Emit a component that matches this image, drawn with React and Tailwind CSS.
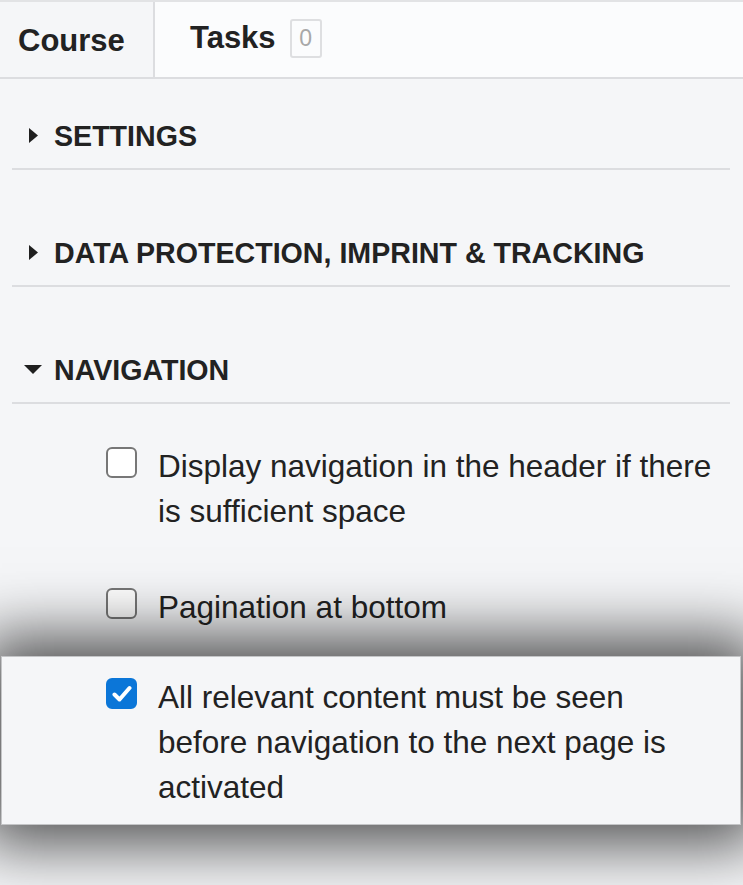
import { useState } from 'react';

const items = [
  { label: 'Display navigation in the header if there is sufficient space', checked: false },
  { label: 'Pagination at bottom', checked: false },
  { label: 'All relevant content must be seen before navigation to the next page is activated', checked: true, focused: true },
];

export default function App() {
  const [open, setOpen] = useState({ settings: false, data: false, navigation: true });
  const [checks, setChecks] = useState(items.map((i) => i.checked));

  const toggle = (key) => setOpen((o) => ({ ...o, [key]: !o[key] }));

  return (
    <div
      className="w-[743px] h-[885px] overflow-hidden bg-[#f5f6f8] border-t-2 border-[#e2e3e5] text-[#222]"
      style={{ fontFamily: '"Liberation Sans", Arial, sans-serif' }}
    >
      {/* Tabs */}
      <div className="flex h-[77px] border-b-2 border-[#dcdde0]">
        <div className="w-[153px] flex items-center pl-[18px] pt-[3px]">
          <span className="text-[31px] font-bold">Course</span>
        </div>
        <div className="flex-1 flex items-center pl-[35px] pb-[2px] bg-[#fbfcfd] border-l-2 border-[#dcdde0]">
          <span className="text-[31px] font-bold">Tasks</span>
          <span className="ml-[14px] h-[39px] w-[32px] flex items-center justify-center border-2 border-[#dedfe1] rounded-[3px] text-[23px] text-[#a8a8a8] bg-[#fbfcfd]">
            0
          </span>
        </div>
      </div>

      {/* Sections */}
      <div className="pl-[12px] pr-[13px] pt-[37px] flex flex-col gap-[63px]">
        <Section title="SETTINGS" open={open.settings} onToggle={() => toggle('settings')} />
        <Section title="DATA PROTECTION, IMPRINT & TRACKING" open={open.data} onToggle={() => toggle('data')} />
        <div>
          <Section title="NAVIGATION" open={open.navigation} onToggle={() => toggle('navigation')} />
          {open.navigation && (
            <div className="pt-[40px] flex flex-col">
              {items.map((item, i) => (
                <div
                  key={i}
                  className={
                    item.focused
                      ? 'relative mt-[26px] -ml-[11px] -mr-[11px] pl-[104px] pr-[20px] pt-[18px] pb-[14px] bg-[#f5f6f8] border border-[#c4c5c7] shadow-[0_0_60px_20px_rgba(0,0,0,0.68)]'
                      : i === 0
                      ? 'pl-[94px]'
                      : 'pl-[94px] mt-[51px]'
                  }
                >
                  <label className="flex items-start gap-[21px] cursor-pointer">
                    <Checkbox
                      checked={checks[i]}
                      onChange={() => setChecks((c) => c.map((v, j) => (j === i ? !v : v)))}
                    />
                    <span className="text-[31.5px] leading-[45px] text-[#222]">{item.label}</span>
                  </label>
                </div>
              ))}
            </div>
          )}
        </div>
      </div>
    </div>
  );
}

function Section({ title, open, onToggle }) {
  return (
    <div className="border-b-2 border-[#dcdde0] pb-[12px]">
      <button onClick={onToggle} className="h-[40px] flex items-center w-full text-left">
        <span className="w-[42px] flex justify-center">
          {open ? (
            <svg width="18" height="9" viewBox="0 0 18 9" className="mt-[-2px]">
              <polygon points="0,0 18,0 9,9" fill="#1f1f1f" />
            </svg>
          ) : (
            <svg width="9" height="15" viewBox="0 0 9 15" className="mt-[-2px]">
              <polygon points="0,0 9,7.5 0,15" fill="#1f1f1f" />
            </svg>
          )}
        </span>
        <span className="text-[28.6px] font-bold">{title}</span>
      </button>
    </div>
  );
}

function Checkbox({ checked, onChange }) {
  return (
    <span
      onClick={onChange}
      className={`mt-[3px] shrink-0 w-[31px] h-[31px] rounded-[6px] flex items-center justify-center ${
        checked ? 'bg-[#0b76d8] border-2 border-[#0b76d8]' : 'bg-white border-2 border-[#777]'
      }`}
    >
      {checked && (
        <svg width="20" height="18" viewBox="0 0 20 18">
          <path d="M2.5 9.5 L7.5 14.5 L17.5 3" stroke="#fff" strokeWidth="4" fill="none" strokeLinecap="round" strokeLinejoin="round" />
        </svg>
      )}
    </span>
  );
}
